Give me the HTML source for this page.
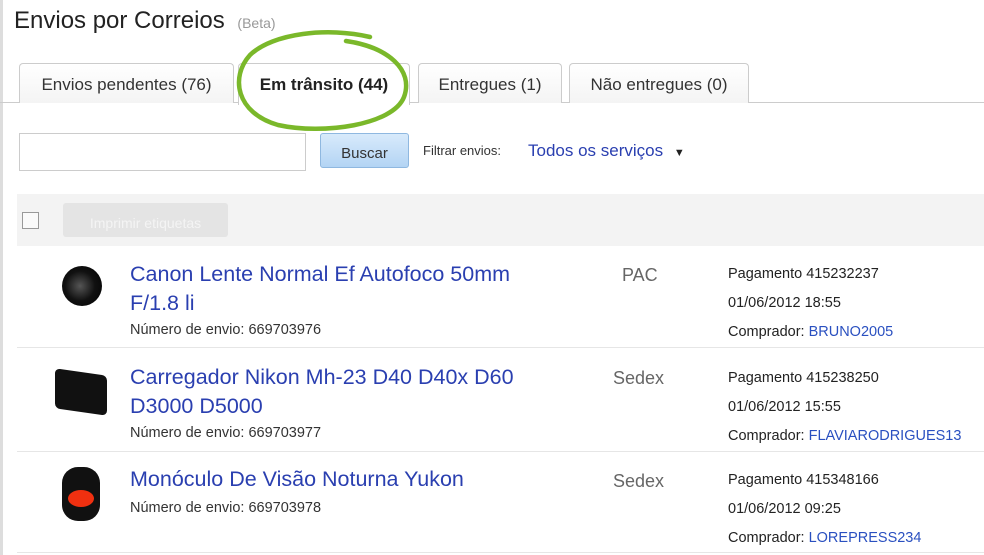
<!DOCTYPE html>
<html><head><meta charset="utf-8"><style>
body{margin:0;width:984px;height:555px;background:#fff;font-family:"Liberation Sans",sans-serif;position:relative;overflow:hidden}
.a{position:absolute}
.tab{position:absolute;top:63px;height:39px;border:1px solid #ccc;border-bottom:none;border-radius:4px 4px 0 0;background:linear-gradient(#fff,#f4f4f4);font-size:17px;color:#333;text-align:center;line-height:42px}
.t{color:#2a3fb0;font-size:21.5px;line-height:29px}
.s{font-size:14.5px;color:#333}
.r{font-size:14.5px;color:#222}
.r b{font-weight:normal;color:#2a50c0}
.sv{font-size:18px;color:#666}
.hr{position:absolute;left:17px;right:0;height:1px;background:#e6e6e6}
</style></head><body>
<div class="a" style="left:0;top:0;width:3px;height:555px;background:#ddd"></div>
<div class="a" style="left:14px;top:7px;font-size:24px;color:#222">Envios por Correios <span style="font-size:14px;color:#999;margin-left:6px">(Beta)</span></div>
<div class="a" style="left:0;top:102px;width:984px;height:1px;background:#ccc"></div>
<div class="tab" style="left:19px;width:213px">Envios pendentes (76)</div>
<div class="tab" style="left:238px;width:170px;height:41px;background:#fff;font-weight:bold;color:#222">Em trânsito (44)</div>
<div class="tab" style="left:418px;width:142px">Entregues (1)</div>
<div class="tab" style="left:569px;width:178px">Não entregues (0)</div>
<svg class="a" style="left:228px;top:25px" width="190" height="112"><path d="M142 12 C100 2 45 8 22 30 C2 52 8 88 50 100 C95 110 165 100 176 72 C186 45 160 22 118 16" fill="none" stroke="#7ab82a" stroke-width="4.5" stroke-linecap="round"/></svg>
<div class="a" style="left:19px;top:133px;width:285px;height:36px;border:1px solid #ccc"></div>
<div class="a" style="left:320px;top:133px;width:87px;height:33px;border:1px solid #8fb8e0;border-radius:3px;background:linear-gradient(#d8eafb,#b3d4f4);text-align:center;line-height:40px;font-size:15px;color:#333">Buscar</div>
<div class="a" style="left:423px;top:143px;font-size:13px;color:#333">Filtrar envios:</div>
<div class="a" style="left:528px;top:141px;font-size:17px;color:#2a3fb0">Todos os serviços <span style="font-size:11px;color:#222;margin-left:6px">▼</span></div>
<div class="a" style="left:17px;top:194px;width:967px;height:52px;background:#f3f3f3"></div>
<div class="a" style="left:22px;top:212px;width:15px;height:15px;border:1px solid #999;background:#fafafa"></div>
<div class="a" style="left:63px;top:203px;width:165px;height:34px;background:#e4e4e4;border-radius:3px;color:#f4f4f4;font-size:14px;line-height:40px;text-align:center">Imprimir etiquetas</div>

<div class="a" style="left:62px;top:266px;width:40px;height:40px;border-radius:50%;background:radial-gradient(circle at 45% 50%,#555,#111 50%,#000)"></div>
<div class="a t" style="left:130px;top:260px">Canon Lente Normal Ef Autofoco 50mm<br>F/1.8 li</div>
<div class="a s" style="left:130px;top:322px">Número de envio: 669703976</div>
<div class="a sv" style="left:622px;top:265px">PAC</div>
<div class="a r" style="left:728px;top:260px;line-height:29px">Pagamento 415232237<br>01/06/2012 18:55<br>Comprador: <b>BRUNO2005</b></div>
<div class="hr" style="top:347px"></div>

<div class="a" style="left:55px;top:372px;width:52px;height:40px;background:#111;border-radius:5px;transform:skewY(8deg)"></div>
<div class="a t" style="left:130px;top:363px">Carregador Nikon Mh-23 D40 D40x D60<br>D3000 D5000</div>
<div class="a s" style="left:130px;top:425px">Número de envio: 669703977</div>
<div class="a sv" style="left:613px;top:368px">Sedex</div>
<div class="a r" style="left:728px;top:364px;line-height:29px">Pagamento 415238250<br>01/06/2012 15:55<br>Comprador: <b>FLAVIARODRIGUES13</b></div>
<div class="hr" style="top:451px"></div>

<div class="a" style="left:62px;top:467px;width:38px;height:54px;border-radius:16px;background:#111"></div>
<div class="a" style="left:68px;top:490px;width:26px;height:17px;border-radius:50%;background:#f03010"></div>
<div class="a t" style="left:130px;top:465px">Monóculo De Visão Noturna Yukon</div>
<div class="a s" style="left:130px;top:500px">Número de envio: 669703978</div>
<div class="a sv" style="left:613px;top:471px">Sedex</div>
<div class="a r" style="left:728px;top:466px;line-height:29px">Pagamento 415348166<br>01/06/2012 09:25<br>Comprador: <b>LOREPRESS234</b></div>
<div class="hr" style="top:552px"></div>
</body></html>
